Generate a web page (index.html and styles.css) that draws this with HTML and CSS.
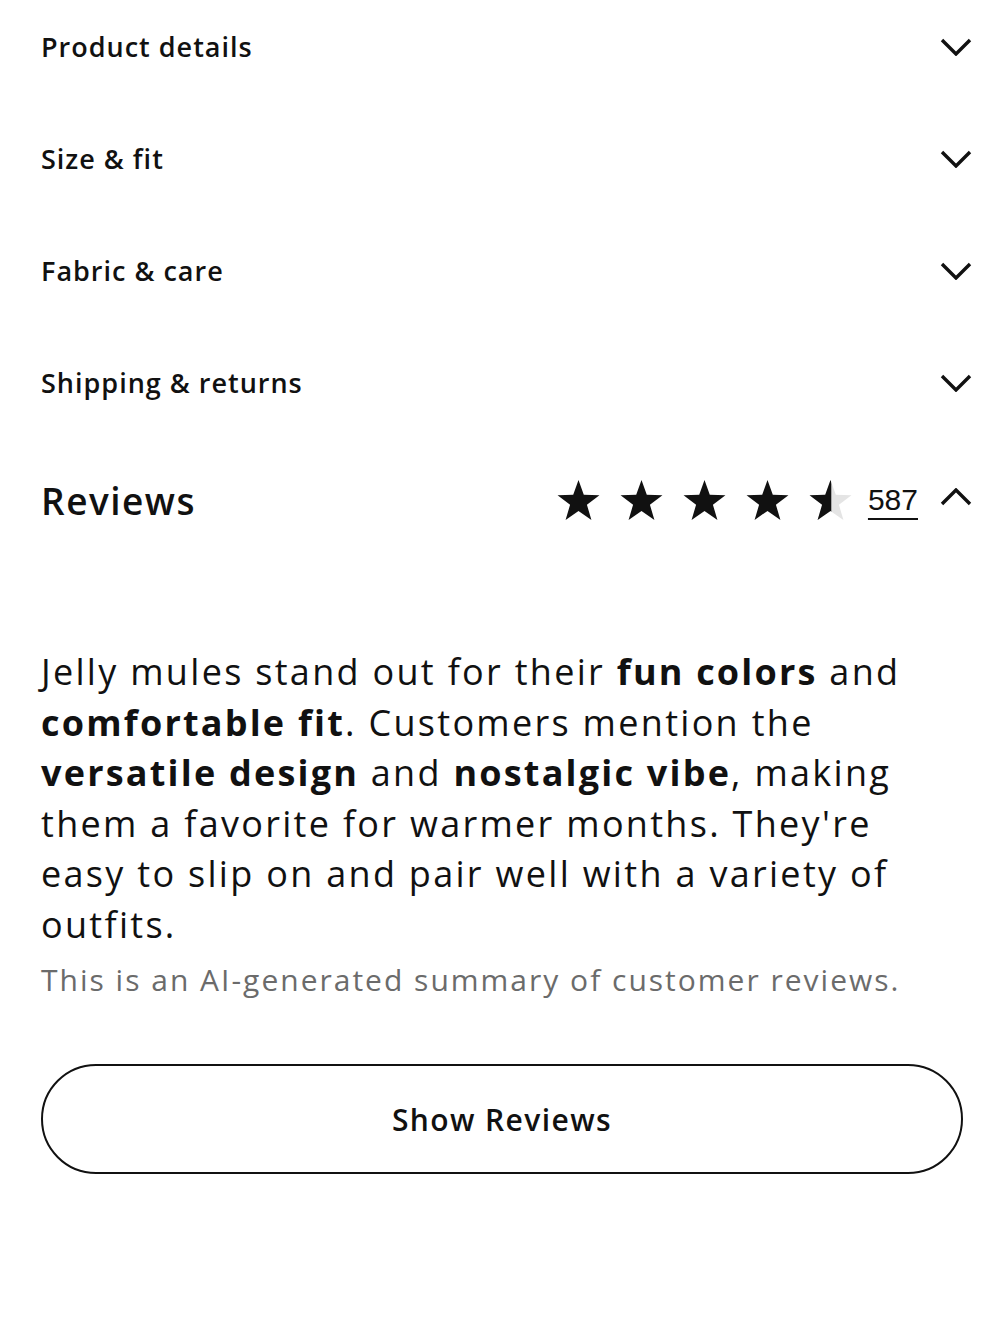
FILE: index.html
```html
<!DOCTYPE html>
<html lang="en">
<head>
    <meta charset="UTF-8">
    <meta name="viewport" content="width=device-width, initial-scale=1.0">
    <title>Product info</title>
    <link rel="stylesheet" href="styles.css">
</head>
<body>
    <div class="accordion">
        <div class="acc-row">
            <span class="acc-title">Product details</span>
            <svg class="chevron" viewBox="0 0 32 18"><path d="M2 2l14 14L30 2"/></svg>
        </div>
        <div class="acc-row">
            <span class="acc-title">Size &amp; fit</span>
            <svg class="chevron" viewBox="0 0 32 18"><path d="M2 2l14 14L30 2"/></svg>
        </div>
        <div class="acc-row">
            <span class="acc-title">Fabric &amp; care</span>
            <svg class="chevron" viewBox="0 0 32 18"><path d="M2 2l14 14L30 2"/></svg>
        </div>
        <div class="acc-row">
            <span class="acc-title">Shipping &amp; returns</span>
            <svg class="chevron" viewBox="0 0 32 18"><path d="M2 2l14 14L30 2"/></svg>
        </div>
    </div>

    <div class="reviews-head">
        <h2 class="reviews-title">Reviews</h2>
        <div class="rating">
            <div class="stars">
                <svg class="star" viewBox="0 0 24 24"><path d="M12 1.5l2.7 7.6 8 .2-6.4 4.9 2.3 7.7L12 17.3l-6.6 4.6 2.3-7.7L1.3 9.3l8-.2z"/></svg>
                <svg class="star" viewBox="0 0 24 24"><path d="M12 1.5l2.7 7.6 8 .2-6.4 4.9 2.3 7.7L12 17.3l-6.6 4.6 2.3-7.7L1.3 9.3l8-.2z"/></svg>
                <svg class="star" viewBox="0 0 24 24"><path d="M12 1.5l2.7 7.6 8 .2-6.4 4.9 2.3 7.7L12 17.3l-6.6 4.6 2.3-7.7L1.3 9.3l8-.2z"/></svg>
                <svg class="star" viewBox="0 0 24 24"><path d="M12 1.5l2.7 7.6 8 .2-6.4 4.9 2.3 7.7L12 17.3l-6.6 4.6 2.3-7.7L1.3 9.3l8-.2z"/></svg>
                <svg class="star" viewBox="0 0 24 24">
                    <defs>
                        <clipPath id="half"><rect x="0" y="0" width="12.4" height="24"/></clipPath>
                    </defs>
                    <path class="star-empty" d="M12 1.5l2.7 7.6 8 .2-6.4 4.9 2.3 7.7L12 17.3l-6.6 4.6 2.3-7.7L1.3 9.3l8-.2z"/>
                    <path clip-path="url(#half)" d="M12 1.5l2.7 7.6 8 .2-6.4 4.9 2.3 7.7L12 17.3l-6.6 4.6 2.3-7.7L1.3 9.3l8-.2z"/>
                </svg>
            </div>
            <a class="count" href="#">587</a>
            <svg class="chevron" viewBox="0 0 32 18"><path d="M2 16L16 2l14 14"/></svg>
        </div>
    </div>

    <div class="summary">
        <p class="summary-text">Jelly mules stand out for their <b>fun colors</b> and<br><b>comfortable fit</b>. Customers mention the<br><b>versatile design</b> and <b>nostalgic vibe</b>, making<br>them a favorite for warmer months. They're<br>easy to slip on and pair well with a variety of<br>outfits.</p>
        <p class="summary-note">This is an AI-generated summary of customer reviews.</p>
    </div>

    <button class="show-btn">Show Reviews</button>
</body>
</html>
```

FILE: styles.css
```css
body {
    margin: 0;
    padding: 0 28px 0 41px;
    font-family: "Open Sans", "Noto Sans", sans-serif;
    color: #111;
    background: #fff;
}

.acc-row {
    display: flex;
    justify-content: space-between;
    align-items: flex-start;
    height: 112px;
    padding-top: 29px;
    box-sizing: border-box;
}

.acc-title {
    font-size: 27px;
    line-height: 36px;
    font-weight: 600;
    letter-spacing: 1px;
}

.chevron {
    width: 32px;
    height: 18px;
    margin-top: 9px;
    fill: none;
    stroke: #111;
    stroke-width: 3.4;
}

.reviews-head {
    display: flex;
    justify-content: space-between;
    align-items: center;
    height: 104px;
}

.reviews-title {
    margin: 0;
    font-size: 37px;
    font-weight: 600;
    letter-spacing: 1.5px;
}

.rating {
    display: flex;
    align-items: center;
}

.stars {
    display: flex;
    gap: 16px;
    margin-right: 14px;
}

.star {
    width: 47px;
    height: 47px;
    fill: #111;
}

.star-empty {
    fill: #e4e4e4;
}

.count {
    font-family: "Liberation Sans", Arial, sans-serif;
    font-size: 30px;
    color: #111;
    text-decoration: underline;
    text-decoration-thickness: 2px;
    text-underline-offset: 8px;
    margin-right: 22px;
}

.rating .chevron {
    margin-top: -6px;
}

.summary {
    padding-top: 95px;
}

.summary-text {
    margin: 0;
    font-size: 36px;
    line-height: 50.5px;
    letter-spacing: 2.3px;
    white-space: nowrap;
}

.summary-text b {
    font-weight: 700;
    letter-spacing: 2.2px;
}

.summary-note {
    margin: 10px 0 0;
    font-size: 30px;
    line-height: 40px;
    color: #6b6b6b;
    letter-spacing: 2px;
}

.show-btn {
    display: block;
    width: 922px;
    height: 110px;
    margin-top: 64px;
    border: 2px solid #111;
    border-radius: 55px;
    background: #fff;
    font-family: "Open Sans", "Noto Sans", sans-serif;
    font-size: 30px;
    font-weight: 600;
    letter-spacing: 1.4px;
    color: #111;
}
```
